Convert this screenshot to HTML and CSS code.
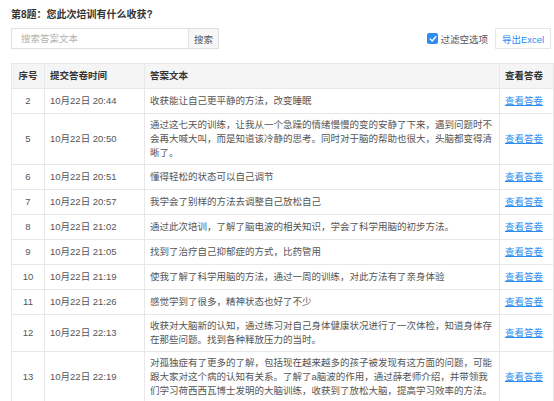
FILE: index.html
```html
<!DOCTYPE html>
<html lang="zh-CN">

<head>
    <meta charset="UTF-8">
    <meta name="viewport" content="width=device-width, initial-scale=1.0">
    <title>答卷列表</title>
    <link rel="stylesheet" href="styles.css">
</head>

<body>
    <div class="page">
        <div class="question-title">第8题：您此次培训有什么收获?</div>

        <div class="toolbar">
            <div class="search-box">
                <input type="text" class="search-input" placeholder="搜索答案文本">
                <button class="search-btn">搜索</button>
            </div>
            <div class="toolbar-right">
                <label class="filter-check">
                    <span class="check-box">
                        <svg width="8" height="8" viewBox="0 0 8 8">
                            <path d="M1.2 4.1 L3.2 6 L6.8 1.8" fill="none" stroke="#fff" stroke-width="1.4" stroke-linecap="round" stroke-linejoin="round" />
                        </svg>
                    </span>
                    过滤空选项
                </label>
                <button class="export-btn">导出Excel</button>
            </div>
        </div>

        <table class="answer-table">
            <thead>
                <tr>
                    <th class="col-no">序号</th>
                    <th class="col-time">提交答卷时间</th>
                    <th class="col-text">答案文本</th>
                    <th class="col-view">查看答卷</th>
                </tr>
            </thead>
            <tbody>
                <tr>
                    <td class="col-no">2</td>
                    <td>10月22日 20:44</td>
                    <td>收获能让自己更平静的方法，改变睡眠</td>
                    <td><a href="#">查看答卷</a></td>
                </tr>
                <tr>
                    <td class="col-no">5</td>
                    <td>10月22日 20:50</td>
                    <td>通过这七天的训练，让我从一个急躁的情绪慢慢的变的安静了下来，遇到问题时不会再大喊大叫，而是知道该冷静的思考。同时对于脑的帮助也很大，头脑都变得清晰了。</td>
                    <td><a href="#">查看答卷</a></td>
                </tr>
                <tr>
                    <td class="col-no">6</td>
                    <td>10月22日 20:51</td>
                    <td>懂得轻松的状态可以自己调节</td>
                    <td><a href="#">查看答卷</a></td>
                </tr>
                <tr>
                    <td class="col-no">7</td>
                    <td>10月22日 20:57</td>
                    <td>我学会了别样的方法去调整自己放松自己</td>
                    <td><a href="#">查看答卷</a></td>
                </tr>
                <tr>
                    <td class="col-no">8</td>
                    <td>10月22日 21:02</td>
                    <td>通过此次培训，了解了脑电波的相关知识，学会了科学用脑的初步方法。</td>
                    <td><a href="#">查看答卷</a></td>
                </tr>
                <tr>
                    <td class="col-no">9</td>
                    <td>10月22日 21:05</td>
                    <td>找到了治疗自己抑郁症的方式，比药管用</td>
                    <td><a href="#">查看答卷</a></td>
                </tr>
                <tr>
                    <td class="col-no">10</td>
                    <td>10月22日 21:19</td>
                    <td>使我了解了科学用脑的方法，通过一周的训练，对此方法有了亲身体验</td>
                    <td><a href="#">查看答卷</a></td>
                </tr>
                <tr>
                    <td class="col-no">11</td>
                    <td>10月22日 21:26</td>
                    <td>感觉学到了很多，精神状态也好了不少</td>
                    <td><a href="#">查看答卷</a></td>
                </tr>
                <tr>
                    <td class="col-no">12</td>
                    <td>10月22日 22:13</td>
                    <td>收获对大脑新的认知，通过练习对自己身体健康状况进行了一次体检，知道身体存在那些问题。找到各种释放压力的当时。</td>
                    <td><a href="#">查看答卷</a></td>
                </tr>
                <tr>
                    <td class="col-no">13</td>
                    <td>10月22日 22:19</td>
                    <td>对孤独症有了更多的了解，包括现在越来越多的孩子被发现有这方面的问题，可能跟大家对这个病的认知有关系。了解了a脑波的作用，通过薛老师介绍，并带领我们学习荷西西瓦博士发明的大脑训练，收获到了放松大脑，提高学习效率的方法。</td>
                    <td><a href="#">查看答卷</a></td>
                </tr>
            </tbody>
        </table>
    </div>
</body>

</html>
```

FILE: styles.css
```css
body {
    margin: 0;
    background-color: #fff;
    font-family: "Liberation Sans", "Noto Sans CJK SC", sans-serif;
    color: #555;
}

.page {
    width: 543px;
    padding-top: 8px;
    padding-left: 11px;
}

.question-title {
    font-size: 10px;
    font-weight: bold;
    line-height: 14px;
    color: #333;
}

/* Toolbar */
.toolbar {
    display: flex;
    justify-content: space-between;
    align-items: center;
    width: 540px;
    margin-top: 6px;
}

.search-box {
    display: flex;
}

.search-input {
    box-sizing: border-box;
    width: 177px;
    height: 21px;
    padding: 0 9px;
    border: 1px solid #e0e0e0;
    border-right: none;
    font-family: inherit;
    font-size: 9.5px;
    color: #555;
    outline: none;
}

.search-input::placeholder {
    color: #b0b0b0;
}

.search-btn {
    box-sizing: border-box;
    width: 31px;
    height: 21px;
    padding: 0;
    border: 1px solid #e0e0e0;
    background-color: #f7f7f7;
    font-family: inherit;
    font-size: 9.5px;
    color: #555;
    cursor: pointer;
}

.toolbar-right {
    display: flex;
    align-items: center;
}

.filter-check {
    display: flex;
    align-items: center;
    gap: 2px;
    font-size: 9.5px;
    color: #555;
}

.check-box {
    display: flex;
    align-items: center;
    justify-content: center;
    width: 11px;
    height: 11px;
    border-radius: 2px;
    background-color: #2d8cf0;
}

.export-btn {
    box-sizing: border-box;
    width: 56px;
    height: 21px;
    margin-left: 7px;
    padding: 0;
    border: 1px solid #e6e6e6;
    background-color: #fff;
    font-family: inherit;
    font-size: 9.5px;
    color: #2d8cf0;
    cursor: pointer;
}

/* Table */
.answer-table {
    width: 543px;
    margin-top: 14px;
    border-collapse: collapse;
    table-layout: fixed;
    font-size: 9.5px;
    line-height: 14px;
}

.answer-table th,
.answer-table td {
    box-sizing: border-box;
    border: 1px solid #e8e8e8;
    padding: 4px 5px;
    text-align: left;
    vertical-align: middle;
}

.answer-table th {
    height: 25px;
    background-color: #f5f5f5;
    font-weight: bold;
    color: #333;
}

.answer-table tbody tr {
    height: 25px;
}

.answer-table .col-no {
    width: 33px;
    padding: 4px 2px;
    text-align: center;
}

.answer-table .col-time {
    width: 100px;
}

.answer-table .col-view {
    width: 54px;
}

.answer-table a {
    color: #2d8cf0;
    text-decoration: underline;
}
```
